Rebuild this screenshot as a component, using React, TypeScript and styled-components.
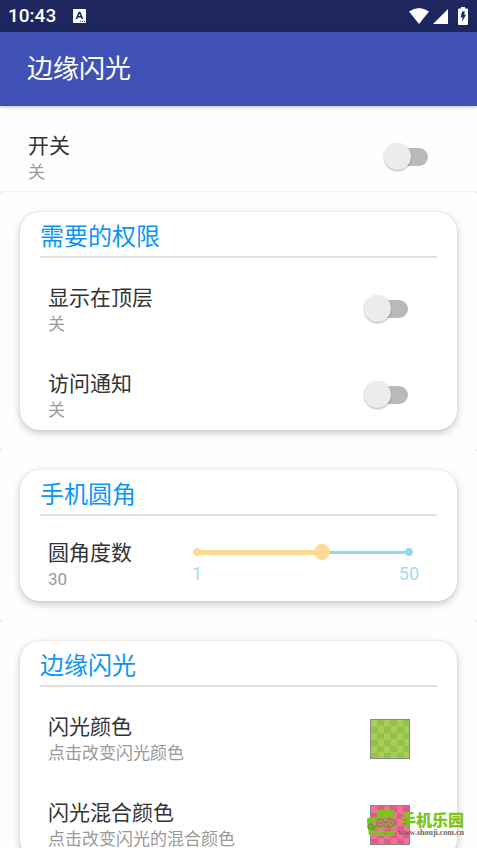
import React, { useId, useState } from "react";
import styled, { createGlobalStyle } from "styled-components";

const GlobalStyle = createGlobalStyle`
  *, *::before, *::after { box-sizing: border-box; }
  html, body { margin: 0; height: 100%; overflow: hidden; background: #fefefe; }
  body, button, input { font-family: Roboto, "Noto Sans CJK SC", sans-serif; }
  #root { height: 100%; }
`;

const Screen = styled.div`
  position: relative;
  height: 100%;
  overflow: hidden;
  display: flex;
  flex-direction: column;
`;

const StatusBar = styled.div`
  flex: none;
  height: 32px;
  padding: 0 9px 0 8px;
  display: flex;
  align-items: center;
  gap: 17px;
  background: #1e275d;
  color: #fff;
`;

const Clock = styled.time`
  font-size: 19px;
  font-weight: 500;
  line-height: 32px;
`;

const StatusIcons = styled.div`
  margin-left: auto;
  display: flex;
  align-items: center;
  gap: 4px;
`;

const BatteryIcon = styled.svg`
  margin-left: 6px;
`;

const AppBar = styled.header`
  flex: none;
  height: 74px;
  padding: 0 27px;
  display: flex;
  align-items: center;
  background: #3f51b5;
  color: #fff;
  box-shadow: 0 1px 3px rgba(0, 0, 0, 0.25);
  z-index: 1;
`;

const AppTitle = styled.h1`
  margin: 0;
  font-size: 26px;
  line-height: 38px;
  font-weight: 400;
`;

const Content = styled.main`
  flex: 1;
  min-height: 0;
  overflow: hidden;
  background: #e4e4e4;
`;

const TopPanel = styled.div`
  background: #fefefe;
  box-shadow: inset 0 -1px #f0f0f0;
`;

const Row = styled.div<{ $compact?: boolean }>`
  height: ${(p) => (p.$compact ? 85 : 86)}px;
  padding: ${(p) => (p.$compact ? 21 : 24)}px 49px 0 28px;
  display: flex;
  justify-content: space-between;
  align-items: flex-start;
`;

const RowText = styled.div`
  display: flex;
  flex-direction: column;
`;

const RowTitle = styled.label`
  font-size: 21px;
  line-height: 32px;
  color: #333;
`;

const RowNote = styled.span`
  font-size: 17px;
  line-height: 20px;
  color: #999;
`;

const Section = styled.section`
  padding: 20px;
  border-radius: 3px;
  background: #fefefe;
`;

const Card = styled.div`
  border-radius: 20px;
  background: #fff;
  box-shadow: 0 3px 8px rgba(0, 0, 0, 0.22), 0 0 2px rgba(0, 0, 0, 0.1);
`;

const CardTitle = styled.h2`
  margin: 0 20px;
  height: 46px;
  border-bottom: 2px solid #e0e0e0;
  font-size: 24px;
  line-height: 50px;
  font-weight: 400;
  color: #0a95fa;
`;

const Switch = styled.input`
  appearance: none;
  margin: 13px 0 0;
  width: 44px;
  height: 27px;
  display: grid;
  align-items: center;
  cursor: pointer;

  &::before,
  &::after {
    content: "";
    grid-area: 1 / 1;
  }
  &::before {
    height: 18px;
    margin-left: 6px;
    border-radius: 9px;
    background: #b9b9b9;
  }
  &::after {
    width: 27px;
    height: 27px;
    border-radius: 50%;
    background: #ececec;
    box-shadow: 0 1px 2px rgba(0, 0, 0, 0.3);
  }
  &:checked::before {
    background: #9fa8da;
  }
  &:checked::after {
    justify-self: end;
    background: #3f51b5;
  }
`;

const SliderBox = styled.div`
  width: 228px;
  margin: 3px -9px 0 0;
`;

const Slider = styled.input`
  appearance: none;
  display: block;
  width: 100%;
  height: 16px;
  margin: 4px 0 0;
  background:
    radial-gradient(circle at 8px 8px, #ffda94 4px, transparent 4px),
    radial-gradient(circle at calc(100% - 8px) 8px, #94d8f2 4px, transparent 4px),
    linear-gradient(#ffda94, #ffda94) 8px 6px / calc((100% - 16px) * var(--filled)) 5px no-repeat,
    linear-gradient(#94d8f2, #94d8f2) 8px 7px / calc(100% - 16px) 3px no-repeat;

  &::-webkit-slider-thumb {
    appearance: none;
    width: 16px;
    height: 16px;
    border-radius: 50%;
    background: #ffda94;
  }
`;

const SliderEnds = styled.div`
  display: flex;
  justify-content: space-between;
  padding: 2px 0 0 3px;
  margin-right: -2px;
  font-size: 18px;
  line-height: 24px;
  color: #a0dcf5;
`;

const Swatch = styled.button<{ $light: string; $dark: string }>`
  width: 40px;
  height: 40px;
  margin: 8px -2px 0 0;
  padding: 0;
  border: 1px solid #888;
  background: conic-gradient(
      ${(p) => p.$dark} 25%,
      ${(p) => p.$light} 0 50%,
      ${(p) => p.$dark} 0 75%,
      ${(p) => p.$light} 0
    )
    0 0 / 13px 13px;
  cursor: pointer;
`;

const Watermark = styled.div`
  position: absolute;
  right: 13px;
  bottom: 11px;
  z-index: 2;
  display: flex;
  align-items: center;
  gap: 2px;
  pointer-events: none;
`;

const WatermarkText = styled.div`
  display: flex;
  flex-direction: column;
  align-items: flex-end;
`;

const WatermarkName = styled.span`
  font: 900 16px/19px "Noto Sans CJK SC", sans-serif;
  color: #7ac51c;
`;

const WatermarkSite = styled.span`
  font: bold 8px/8px "Liberation Serif", serif;
  color: #666;
`;

function SwitchRow({ title }: { title: string }) {
  const id = useId();
  const [on, setOn] = useState(false);
  return (
    <Row>
      <RowText>
        <RowTitle htmlFor={id}>{title}</RowTitle>
        <RowNote>{on ? "开" : "关"}</RowNote>
      </RowText>
      <Switch id={id} type="checkbox" role="switch" checked={on} onChange={(e) => setOn(e.target.checked)} />
    </Row>
  );
}

function SliderRow() {
  const id = useId();
  const [value, setValue] = useState(30);
  return (
    <Row $compact>
      <RowText>
        <RowTitle htmlFor={id}>圆角度数</RowTitle>
        <RowNote>{value}</RowNote>
      </RowText>
      <SliderBox>
        <Slider
          id={id}
          type="range"
          min={1}
          max={50}
          value={value}
          onChange={(e) => setValue(Number(e.target.value))}
          style={{ "--filled": (value - 1) / 49 } as React.CSSProperties}
        />
        <SliderEnds>
          <span>1</span>
          <span>50</span>
        </SliderEnds>
      </SliderBox>
    </Row>
  );
}

function ColorRow({ title, note, light, dark }: { title: string; note: string; light: string; dark: string }) {
  const id = useId();
  return (
    <Row>
      <RowText>
        <RowTitle htmlFor={id}>{title}</RowTitle>
        <RowNote>{note}</RowNote>
      </RowText>
      <Swatch id={id} type="button" $light={light} $dark={dark} />
    </Row>
  );
}

function PhonesLogo() {
  return (
    <svg width="30" height="28" viewBox="0 0 30 28" aria-hidden="true">
      <g fill="none" stroke="#7ac51c" strokeWidth="1.5">
        <path d="M1.5 10.5 10 8.5M2 10.5 3.5 25l7-1" />
        <rect x="11.5" y="1.5" width="16" height="25" rx="2" />
      </g>
      <path d="M1 10.5Q1 9 3 8.8L10.5 7.5V13L6 12.5 1.5 15.5Z" fill="#7ac51c" />
      <path d="M3 21.5 10.5 20.5V24.5L3.5 25.5Z" fill="#7ac51c" />
      <path d="M11 3Q11 .8 13 .8H26Q28 .8 28 3V10L25.5 7.5 20 9.5 16 8 11 12.5Z" fill="#7ac51c" />
      <path d="M11 22.5H28V25Q28 27 26 27H13Q11 27 11 25Z" fill="#7ac51c" />
      <circle cx="19.5" cy="24.7" r="1.2" fill="#e05c88" />
      <g fill="#f06c98" stroke="#58a51c" strokeWidth="1.5">
        <circle cx="14.5" cy="14" r="3.7" />
        <circle cx="24.5" cy="14" r="3.7" />
        <circle cx="4.5" cy="17.5" r="2.5" />
      </g>
      <path d="M18 13.5Q19.5 12.5 21 13.5M7 17.5H10.5" fill="none" stroke="#58a51c" strokeWidth="1.5" />
      <g fill="#58a51c">
        <circle cx="14.5" cy="14" r="1.3" />
        <circle cx="24.5" cy="14" r="1.3" />
        <circle cx="4.5" cy="17.5" r="1" />
      </g>
      <path d="M16.5 19.5Q19.5 21.5 22.5 19.5" fill="none" stroke="#7ac51c" />
    </svg>
  );
}

export default function App() {
  return (
    <>
      <GlobalStyle />
      <Screen>
        <StatusBar>
          <Clock>10:43</Clock>
          <svg width="13" height="14" viewBox="0 0 13 14" aria-hidden="true">
            <rect width="13" height="14" rx="1" fill="#fff" />
            <path d="M3.3 10 6.2 3.5h.6L9.5 10M4.5 7.8h4" fill="none" stroke="#1e275d" strokeWidth="1.6" />
            <path d="M7 12.3h1M9 12.3h1M11 12.3h1" stroke="#1e275d" />
          </svg>
          <StatusIcons>
            <svg width="20" height="16" viewBox="0 0 20 16" aria-hidden="true">
              <path d="M0 3.5Q10-3.5 20 3.5L10 16Z" fill="#fff" />
            </svg>
            <svg width="15" height="15" viewBox="0 0 15 15" aria-hidden="true">
              <path d="M15 0v15H0Z" fill="#fff" />
            </svg>
            <BatteryIcon width="10" height="18" viewBox="0 0 10 18" aria-hidden="true">
              <path d="M3 1.6V0h4v1.6h2q1 0 1 1V17q0 1-1 1H1q-1 0-1-1V2.6q0-1 1-1Z" fill="#fff" />
              <path d="M4 4.5h3L6 7.5h2L4.2 15l.4-4.5H2.7Z" fill="#1e275d" />
            </BatteryIcon>
          </StatusIcons>
        </StatusBar>
        <AppBar>
          <AppTitle>边缘闪光</AppTitle>
        </AppBar>
        <Content>
          <TopPanel>
            <SwitchRow title="开关" />
          </TopPanel>
          <Section>
            <Card>
              <CardTitle>需要的权限</CardTitle>
              <SwitchRow title="显示在顶层" />
              <SwitchRow title="访问通知" />
            </Card>
          </Section>
          <Section>
            <Card>
              <CardTitle>手机圆角</CardTitle>
              <SliderRow />
            </Card>
          </Section>
          <Section>
            <Card>
              <CardTitle>边缘闪光</CardTitle>
              <ColorRow title="闪光颜色" note="点击改变闪光颜色" light="#a5cf5a" dark="#96c148" />
              <ColorRow title="闪光混合颜色" note="点击改变闪光的混合颜色" light="#f4709c" dark="#e05c88" />
            </Card>
          </Section>
        </Content>
        <Watermark>
          <PhonesLogo />
          <WatermarkText>
            <WatermarkName>手机乐园</WatermarkName>
            <WatermarkSite>www.shouji.com.cn</WatermarkSite>
          </WatermarkText>
        </Watermark>
      </Screen>
    </>
  );
}
